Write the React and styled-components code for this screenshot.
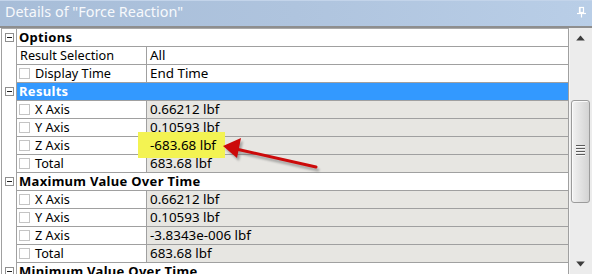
import React from "react";
import styled, { createGlobalStyle } from "styled-components";

const GlobalStyle = createGlobalStyle`
  html, body { margin: 0; padding: 0; background: #ffffff; }
  body { font-family: "Noto Sans", "Open Sans", sans-serif; }
  * { box-sizing: border-box; }
`;

const Panel = styled.div`
  width: 592px;
  height: 274px;
  overflow: hidden;
  display: flex;
  flex-direction: column;
  background: #fff;
`;

const TitleBar = styled.div`
  height: 28px;
  flex: none;
  display: flex;
  align-items: center;
  justify-content: space-between;
  padding: 0 5px 2px 5px;
  background: linear-gradient(90deg, #a7bdd8 0%, #afc4de 50%, #b9cee7 100%);
  border-bottom: 2px solid #8e8e8e;
  box-shadow: inset 0 1px 0 #c3d4ea;
`;

const Title = styled.span`
  color: #f7f9fc;
  font-size: 14.4px;
  line-height: 26px;
`;

const Body = styled.div`
  flex: 1;
  display: flex;
  min-height: 0;
`;

const Grid = styled.div`
  position: relative;
  flex: 1;
  margin-left: 1px;
  border-left: 1px solid #a0a0a0;
  border-top: 1px solid #a9a9a9;
  border-right: 1px solid #a0a0a0;
  font-size: 12.7px;
  color: #000;
`;

const Row = styled.div`
  display: flex;
  height: 18px;
`;

const Gutter = styled.div`
  width: 14px;
  flex: none;
  display: flex;
  align-items: center;
  justify-content: center;
  padding-left: 1px;
  padding-bottom: 1px;
`;

const Expander = styled.span`
  width: 9px;
  height: 9px;
  border: 1px solid #8f8f8f;
  background: #fff;
  position: relative;
  &::after {
    content: "";
    position: absolute;
    left: 1px;
    right: 1px;
    top: 3px;
    height: 1px;
    background: #1e1e1e;
  }
`;

const HeaderCell = styled.div`
  flex: 1;
  border-left: 1px solid #a0a0a0;
  border-bottom: 1px solid #a0a0a0;
  padding-left: 2px;
  font-weight: bold;
  font-size: 13px;
  letter-spacing: 0.3px;
  line-height: 17px;
  background: ${(p) => (p.$selected ? "#3399ff" : "#ffffff")};
  color: ${(p) => (p.$selected ? "#ffffff" : "#000000")};
  white-space: nowrap;
`;

const LabelCell = styled.div`
  width: 130px;
  flex: none;
  display: flex;
  align-items: center;
  gap: 5px;
  border-left: 1px solid #a0a0a0;
  border-bottom: 1px solid #a0a0a0;
  padding-left: ${(p) => (p.$check ? "2px" : "3px")};
  line-height: 17px;
  white-space: nowrap;
  background: #fff;
`;

const CheckBox = styled.span`
  width: 11px;
  height: 11px;
  flex: none;
  border: 1px solid #c4c4c4;
  background: #fff;
  margin-top: -1px;
`;

const ValueCell = styled.div`
  flex: 1;
  border-left: 1px solid #a0a0a0;
  border-bottom: 1px solid #a0a0a0;
  padding-left: 3px;
  font-size: 13.4px;
  line-height: 17px;
  white-space: nowrap;
  background: ${(p) => (p.$readonly ? "#e7e6e2" : "#ffffff")};
`;

const ValueText = styled.span`
  position: relative;
  z-index: 2;
`;

const Highlight = styled.div`
  position: absolute;
  left: 136px;
  top: 103px;
  width: 87px;
  height: 26px;
  background: #f3f352;
  z-index: 1;
`;

const ArrowSvg = styled.svg`
  position: absolute;
  left: 0;
  top: 0;
  z-index: 3;
  overflow: visible;
  pointer-events: none;
`;

const Scrollbar = styled.div`
  width: 23px;
  flex: none;
  display: flex;
  flex-direction: column;
  background: #ececec;
  border-left: 1px solid #f6f6f6;
`;

const ScrollButton = styled.div`
  height: 20px;
  flex: none;
  display: flex;
  align-items: center;
  justify-content: center;
  padding-right: 2px;
`;

const Track = styled.div`
  flex: 1;
  padding-top: 52px;
  padding-left: 1px;
  padding-right: 2px;
`;

const Thumb = styled.div`
  height: 103px;
  border: 1px solid #9b9b9b;
  border-radius: 3px;
  background: linear-gradient(90deg, #f2f2f2 0%, #e4e4e4 45%, #d3d3d3 100%);
  box-shadow: inset 1px 1px 0 #fbfbfb;
  display: flex;
  flex-direction: column;
  align-items: center;
  padding-top: 44px;
  gap: 2px;
`;

const Grip = styled.span`
  width: 9px;
  height: 1px;
  background: #5b5b5b;
  box-shadow: 0 1px 0 #f8f8f8;
`;

const PinIcon = () => (
  <svg width="11" height="12" viewBox="0 0 11 12">
    <rect x="3.5" y="1.5" width="4" height="5" fill="none" stroke="#fff" strokeWidth="1.2" />
    <rect x="3" y="1" width="1.6" height="6" fill="#fff" />
    <line x1="1" y1="7.5" x2="10" y2="7.5" stroke="#fff" strokeWidth="1.2" />
    <line x1="5.5" y1="7.5" x2="5.5" y2="11.5" stroke="#fff" strokeWidth="1.2" />
  </svg>
);

const ArrowUp = () => (
  <svg width="9" height="6" viewBox="0 0 9 6">
    <polygon points="4.5,0.5 8.8,5.5 0.2,5.5" fill="#3c3c3c" />
  </svg>
);

const ArrowDown = () => (
  <svg width="9" height="6" viewBox="0 0 9 6">
    <polygon points="0.2,0.5 8.8,0.5 4.5,5.5" fill="#3c3c3c" />
  </svg>
);

const groups = [
  {
    title: "Options",
    rows: [
      { label: "Result Selection", value: "All" },
      { label: "Display Time", value: "End Time", check: true },
    ],
  },
  {
    title: "Results",
    selected: true,
    readonly: true,
    rows: [
      { label: "X Axis", value: "0.66212 lbf", check: true },
      { label: "Y Axis", value: "0.10593 lbf", check: true },
      { label: "Z Axis", value: "-683.68 lbf", check: true },
      { label: "Total", value: "683.68 lbf", check: true },
    ],
  },
  {
    title: "Maximum Value Over Time",
    readonly: true,
    rows: [
      { label: "X Axis", value: "0.66212 lbf", check: true },
      { label: "Y Axis", value: "0.10593 lbf", check: true },
      { label: "Z Axis", value: "-3.8343e-006 lbf", check: true },
      { label: "Total", value: "683.68 lbf", check: true },
    ],
  },
  {
    title: "Minimum Value Over Time",
    readonly: true,
    rows: [],
  },
];

export default function App() {
  return (
    <>
      <GlobalStyle />
      <Panel>
        <TitleBar>
          <Title>Details of "Force Reaction"</Title>
          <PinIcon />
        </TitleBar>
        <Body>
          <Grid>
            {groups.map((g) => (
              <React.Fragment key={g.title}>
                <Row>
                  <Gutter>
                    <Expander />
                  </Gutter>
                  <HeaderCell $selected={g.selected}>{g.title}</HeaderCell>
                </Row>
                {g.rows.map((r) => (
                  <Row key={g.title + r.label}>
                    <Gutter />
                    <LabelCell $check={r.check}>
                      {r.check && <CheckBox />}
                      <span>{r.label}</span>
                    </LabelCell>
                    <ValueCell $readonly={g.readonly}>
                      <ValueText>{r.value}</ValueText>
                    </ValueCell>
                  </Row>
                ))}
              </React.Fragment>
            ))}
            <Highlight />
            <ArrowSvg width="566" height="246">
              <defs>
                <filter id="arrowShadow" x="-20%" y="-50%" width="140%" height="200%">
                  <feGaussianBlur stdDeviation="1.2" />
                </filter>
              </defs>
              <g transform="translate(2,3)" opacity="0.45" filter="url(#arrowShadow)">
                <line x1="234" y1="120" x2="314" y2="138" stroke="#555" strokeWidth="3" strokeLinecap="round" />
                <polygon points="221,117 239,109 235,129" fill="#555" />
              </g>
              <line x1="234" y1="120" x2="314" y2="138" stroke="#cc0a0a" strokeWidth="3" strokeLinecap="round" />
              <polygon points="221,117 239,109 235,129" fill="#cc0a0a" />
            </ArrowSvg>
          </Grid>
          <Scrollbar>
            <ScrollButton>
              <ArrowUp />
            </ScrollButton>
            <Track>
              <Thumb>
                <Grip />
                <Grip />
                <Grip />
                <Grip />
              </Thumb>
            </Track>
            <ScrollButton>
              <ArrowDown />
            </ScrollButton>
          </Scrollbar>
        </Body>
      </Panel>
    </>
  );
}
